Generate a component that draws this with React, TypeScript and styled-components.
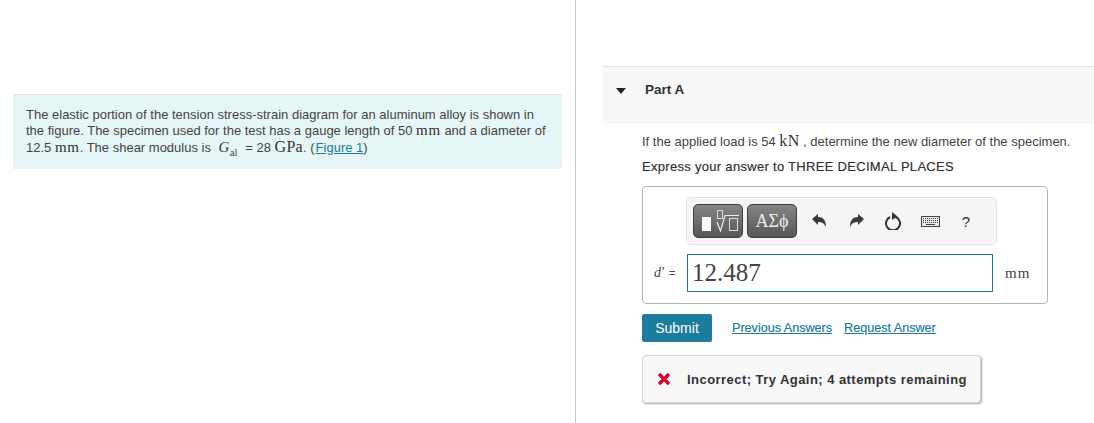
import React from "react";
import styled, { createGlobalStyle } from "styled-components";

const GlobalStyle = createGlobalStyle`
  html, body {
    margin: 0;
    padding: 0;
    background: #fff;
  }
  body {
    font-family: "Liberation Sans", Arial, sans-serif;
    font-size: 13px;
    color: #333;
  }
`;

const Page = styled.div`
  display: flex;
  width: 1094px;
  height: 423px;
  overflow: hidden;
`;

const LeftColumn = styled.div`
  box-sizing: border-box;
  width: 576px;
  flex: none;
  padding: 94px 13px 0;
  border-right: 1px solid #c8c8c8;
`;

const Intro = styled.div`
  height: 75px;
  box-sizing: border-box;
  padding: 12px 8px 0 13px;
  background: #e6f6f7;
  border-top: 1px solid #dfe5e5;
  line-height: 16px;
  color: #444;
`;

const MathText = styled.span`
  font-family: "Liberation Serif", "DejaVu Serif", serif;
  font-size: ${(p: { $size?: number }) => p.$size ?? 15}px;
  letter-spacing: ${(p: { $size?: number }) => (p.$size ? 0.3 : 0.7)}px;
  line-height: 1;
  color: #333;
`;

const MathItalic = styled(MathText)`
  margin-left: 4px;
  font-style: italic;
`;

const Sub = styled.sub`
  margin-right: 4px;
  font-family: "Liberation Serif", serif;
  font-size: 11px;
  line-height: 0;
`;

const FigureLink = styled.a`
  margin-left: 1px;
  color: #1c7c9c;
  text-decoration: underline;
`;

const RightColumn = styled.div`
  flex: 1;
  padding: 66px 0 0 26px;
`;

const PartHeader = styled.div`
  box-sizing: border-box;
  height: 58px;
  display: flex;
  align-items: flex-start;
  padding: 16px 0 0 14px;
  background: #f8f8f8;
  border-top: 1px solid #e4e4e4;
`;

const Caret = styled.span`
  width: 0;
  height: 0;
  margin: 5px 19px 0 0;
  border-left: 5.5px solid transparent;
  border-right: 5.5px solid transparent;
  border-top: 6px solid #222;
`;

const PartTitle = styled.span`
  font-weight: bold;
  font-size: 13.5px;
  line-height: 14px;
  color: #333;
`;

const Content = styled.div`
  width: 406px;
  margin-left: 40px;
`;

const Question = styled.p`
  margin: 9px 0 0;
  line-height: 18px;
  white-space: nowrap;
  color: #444;
`;

const Instruction = styled.p`
  margin: 7px 0 0;
  line-height: 18px;
  letter-spacing: 0.3px;
  color: #333;
  -webkit-text-stroke: 0.2px #333;
`;

const AnswerCard = styled.div`
  box-sizing: border-box;
  height: 118px;
  margin-top: 10px;
  padding: 10px 0 0 9px;
  border: 1px solid #b4b4b4;
  border-radius: 4px;
`;

const Toolbar = styled.div`
  box-sizing: border-box;
  width: 311px;
  height: 48px;
  margin-left: 34px;
  display: flex;
  align-items: center;
  padding-left: 6px;
  background: #f5f5f5;
  border: 1px solid #e4e4e4;
  border-radius: 5px;
`;

const TemplateButton = styled.div`
  box-sizing: border-box;
  width: 50px;
  height: 34px;
  margin-right: 4px;
  flex: none;
  display: flex;
  align-items: center;
  justify-content: center;
  color: #eee;
  background: linear-gradient(#858585, #565656);
  border: 1px solid #3f3f3f;
  border-radius: 5px;
  font-family: "Liberation Serif", "DejaVu Serif", serif;
  font-size: 18px;
`;

const ToolIcon = styled.svg`
  flex: none;
  display: block;
`;

const ToolSlot = styled.span`
  width: ${(p: { $w: number }) => p.$w}px;
  flex: none;
  display: flex;
  justify-content: center;
  align-items: center;
`;

const Help = styled.span`
  font-size: 15px;
  color: #333;
`;

const InputRow = styled.div`
  display: flex;
  align-items: center;
  margin-top: 9px;
`;

const Label = styled.span`
  box-sizing: border-box;
  width: 35px;
  flex: none;
  padding-left: 2px;
  font-size: 11px;
  word-spacing: 2px;
  color: #444;
  white-space: nowrap;
`;

const LabelMath = styled.span`
  font-family: "Liberation Serif", serif;
  font-style: italic;
  font-size: 14px;
`;

const AnswerInput = styled.div`
  box-sizing: border-box;
  width: 306px;
  height: 38px;
  padding-left: 4px;
  border: 1px solid #1c7c9c;
  font-family: "Liberation Serif", serif;
  font-size: 25px;
  line-height: 35px;
  color: #444;
`;

const Unit = styled.span`
  margin-left: 12px;
  font-family: "Liberation Serif", "DejaVu Serif", serif;
  font-size: 15px;
  letter-spacing: 1px;
  color: #444;
`;

const Actions = styled.div`
  display: flex;
  align-items: center;
  margin-top: 10px;
`;

const SubmitButton = styled.button`
  width: 70px;
  height: 28px;
  padding: 0;
  border: 0;
  border-radius: 2px;
  background: #1c7c9c;
  color: #fff;
  font-family: inherit;
  font-size: 14px;
`;

const ActionLink = styled.a`
  margin-left: ${(p: { $gap: number }) => p.$gap}px;
  font-size: 12.6px;
  color: #1c7c9c;
  text-decoration: underline;
  -webkit-text-stroke: 0.2px #1c7c9c;
`;

const Feedback = styled.div`
  box-sizing: border-box;
  width: 339px;
  height: 48px;
  margin-top: 13px;
  display: flex;
  align-items: center;
  padding-left: 14px;
  background: #f8f8f8;
  border: 1px solid #d4d4d4;
  border-radius: 4px;
  box-shadow: 1px 1px 2px #aaa;
`;

const FeedbackText = styled.span`
  margin-left: 16px;
  font-weight: bold;
  font-size: 13px;
  letter-spacing: 0.45px;
  color: #333;
  white-space: nowrap;
`;

const App: React.FC = () => {
  return (
    <Page>
      <GlobalStyle />
      <LeftColumn>
        <Intro>
          The elastic portion of the tension stress-strain diagram for an aluminum alloy is shown in
          the figure. The specimen used for the test has a gauge length of 50 <MathText>mm</MathText> and
          a diameter of 12.5 <MathText>mm</MathText>. The shear modulus is{" "}
          <MathItalic $size={15}>G</MathItalic>
          <Sub>al</Sub> = 28 <MathText $size={16}>GPa</MathText>. (<FigureLink>Figure 1</FigureLink>)
        </Intro>
      </LeftColumn>
      <RightColumn>
        <PartHeader>
          <Caret />
          <PartTitle>Part A</PartTitle>
        </PartHeader>
        <Content>
          <Question>
            If the applied load is 54 <MathText $size={16}>kN</MathText> , determine the new diameter of the specimen.
          </Question>
          <Instruction>Express your answer to THREE DECIMAL PLACES</Instruction>
          <AnswerCard>
            <Toolbar>
              <TemplateButton>
                <svg width="48" height="32" viewBox="0 0 48 32" fill="none">
                  <rect x="8" y="12" width="9" height="14" fill="#fff" />
                  <rect x="23.5" y="5.5" width="5" height="8" stroke="#ddd" />
                  <path d="M23 17l3.5 9L31 10.5h14" stroke="#eee" strokeWidth="1.2" />
                  <rect x="35.5" y="13.5" width="8" height="12" stroke="#ddd" />
                </svg>
              </TemplateButton>
              <TemplateButton>ΑΣϕ</TemplateButton>
              <ToolSlot $w={35}>
                <ToolIcon width="14" height="14" viewBox="0 0 14 14">
                  <path d="M0 5L6 0v3c5 0 8 3 8 10-2-4-4-5-8-5v3z" fill="#3a3a3a" />
                </ToolIcon>
              </ToolSlot>
              <ToolSlot $w={41}>
                <ToolIcon width="14" height="14" viewBox="0 0 14 14">
                  <path d="M14 5L8 0v3C3 3 0 6 0 13c2-4 4-5 8-5v3z" fill="#3a3a3a" />
                </ToolIcon>
              </ToolSlot>
              <ToolSlot $w={32}>
                <ToolIcon width="16" height="18" viewBox="0 0 16 18" fill="none">
                  <path d="M5 5A7 7 0 1 0 11 5" stroke="#333" strokeWidth="2" />
                  <path d="M7 0l5.5 4.5L7 8z" fill="#333" />
                </ToolIcon>
              </ToolSlot>
              <ToolSlot $w={42}>
                <ToolIcon width="19" height="11" viewBox="0 0 19 11">
                  <rect x="0.5" y="0.5" width="18" height="10" fill="#e8e8e8" stroke="#444" />
                  <path d="M2 2.5h15M2 4.5h15M2 6.5h15" stroke="#444" strokeDasharray="1 1" />
                  <path d="M5 8.5h9" stroke="#444" />
                </ToolIcon>
              </ToolSlot>
              <ToolSlot $w={30}>
                <Help>?</Help>
              </ToolSlot>
            </Toolbar>
            <InputRow>
              <Label>
                <LabelMath>d′</LabelMath> =
              </Label>
              <AnswerInput>12.487</AnswerInput>
              <Unit>mm</Unit>
            </InputRow>
          </AnswerCard>
          <Actions>
            <SubmitButton>Submit</SubmitButton>
            <ActionLink $gap={20}>Previous Answers</ActionLink>
            <ActionLink $gap={12}>Request Answer</ActionLink>
          </Actions>
          <Feedback>
            <svg width="14" height="14" viewBox="0 0 14 14">
              <path d="M2 2l10 10M12 2L2 12" stroke="#d4002a" strokeWidth="3.4" />
            </svg>
            <FeedbackText>Incorrect; Try Again; 4 attempts remaining</FeedbackText>
          </Feedback>
        </Content>
      </RightColumn>
    </Page>
  );
};

export default App;
